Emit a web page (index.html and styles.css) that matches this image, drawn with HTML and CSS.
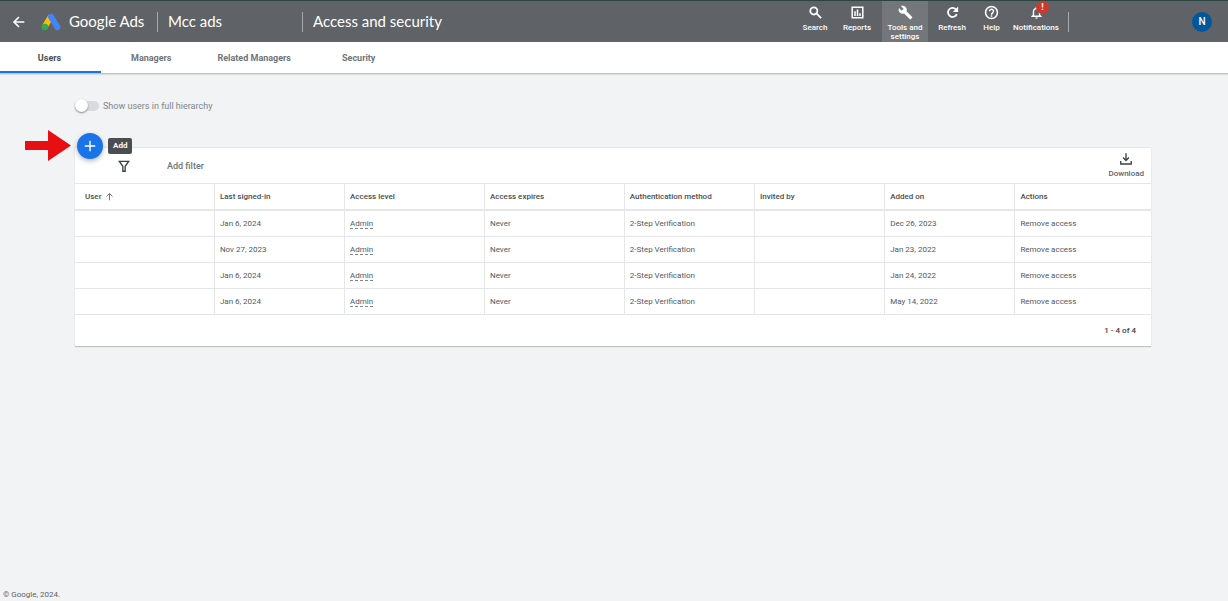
FILE: index.html
```
<!DOCTYPE html>
<html lang="en">
<head>
<meta charset="utf-8">
<meta name="viewport" content="width=device-width, initial-scale=1">
<title>Access and security - Google Ads</title>
<link rel="stylesheet" href="styles.css">
</head>
<body>
<header class="topbar">
  <button class="back" type="button" aria-label="Back">
    <svg viewBox="0 0 24 24" width="16" height="16"><path d="M20 12H5M12 4.5L4.500 12l7.500 7.500" fill="none" stroke="#fff" stroke-width="2.500"/></svg>
  </button>
  <a class="brand" href="#">
    <svg viewBox="0 0 20 18" width="20" height="18" aria-hidden="true">
      <path d="M3.600 14L10 3.400" stroke="#fbbc04" stroke-width="6" fill="none"/>
      <path d="M10.200 4L16.300 14" stroke="#4285f4" stroke-width="6.200" stroke-linecap="round" fill="none"/>
      <circle cx="3.900" cy="14" r="3.300" fill="#34a853"/>
    </svg>
    <span>Google Ads</span>
  </a>
  <span class="account">Mcc ads</span>
  <h1 class="title">Access and security</h1>
  <nav class="tools" aria-label="Tools">
    <button class="tool" type="button">
      <svg viewBox="0 0 24 24"><path fill="none" stroke="#fff" stroke-width="2.800" d="M15 9.500a5.700 5.700 0 1 1-11.400 0a5.700 5.700 0 0 1 11.400 0zM13.500 13.500l7.500 7.500"/></svg>
      <span>Search</span>
    </button>
    <button class="tool" type="button">
      <svg viewBox="0 0 24 24"><path fill="none" stroke="#fff" stroke-width="2.400" d="M3.500 3.500h17v17h-17zM8 10v7.500M12 7v10.500M16 13v4.500"/></svg>
      <span>Reports</span>
    </button>
    <button class="tool tool-active" type="button">
      <svg viewBox="0 0 24 24"><path fill="#fff" d="M22.700 19l-9.100-9.100c.9-2.300.4-5-1.500-6.900-2-2-5-2.400-7.400-1.300L9 6 6 9 1.600 4.700C.4 7.100.9 10.100 2.900 12.100c1.900 1.900 4.600 2.400 6.900 1.500l9.100 9.100c.4.400 1 .4 1.400 0l2.300-2.300c.5-.4.500-1.100.1-1.400z"/></svg>
      <span>Tools and settings</span>
    </button>
    <button class="tool" type="button">
      <svg viewBox="0 0 24 24"><path fill="none" stroke="#fff" stroke-width="2.800" d="M18 7.500A7.300 7.300 0 1 0 18.900 14.500"/><path fill="#fff" d="M21 2.500v8.500h-8.500z"/></svg>
      <span>Refresh</span>
    </button>
    <button class="tool tool-slim" type="button">
      <svg viewBox="0 0 24 24"><circle cx="12" cy="12" r="9.500" fill="none" stroke="#fff" stroke-width="2.500"/><path fill="none" stroke="#fff" stroke-width="2.200" d="M8.800 10a3.200 3.200 0 1 1 5.300 2.400c-1.300 1-2.100 1.500-2.100 3M12 16.500v2.200"/></svg>
      <span>Help</span>
    </button>
    <button class="tool tool-wide" type="button">
      <svg viewBox="0 0 24 24"><path fill="#fff" d="M12 22c1.100 0 2-.9 2-2h-4c0 1.100.9 2 2 2zm6-6v-5c0-3.100-1.600-5.600-4.500-6.300V4a1.500 1.500 0 0 0-3 0v.7C7.600 5.400 6 7.900 6 11v5l-2.500 2v1.200h17V18zm-2.200.8H8.200V11c0-2.500 1.500-4.300 3.800-4.300s3.800 1.800 3.800 4.300z"/></svg>
      <span>Notifications</span>
      <b class="badge">!</b>
    </button>
  </nav>
  <button class="avatar" type="button" aria-label="Account N">N</button>
</header>
<nav class="tabs" aria-label="Sections">
  <a class="tab tab-current" href="#" aria-current="page">Users</a>
  <a class="tab" href="#">Managers</a>
  <a class="tab" href="#">Related Managers</a>
  <a class="tab" href="#">Security</a>
</nav>
<main class="content">
  <label class="hierarchy">
    <input class="switch" type="checkbox" role="switch">
    <span>Show users in full hierarchy</span>
  </label>
  <section class="card">
    <div class="add-group">
      <svg class="pointer" viewBox="0 0 46 31" width="46" height="31" aria-hidden="true"><path fill="#e60f14" d="M0 11h23V0l23 15.500L23 31V20H0z"/></svg>
      <button class="add" type="button" aria-label="Add">
        <svg viewBox="0 0 24 24" width="14" height="14"><path d="M12 3v18M3 12h18" stroke="#fff" stroke-width="2.400"/></svg>
      </button>
      <span class="tip" role="tooltip">Add</span>
    </div>
    <div class="toolbar">
      <button class="filter" type="button">
        <svg viewBox="0 0 24 24" width="14" height="14" aria-hidden="true"><path fill="none" stroke="#3c4043" stroke-width="2.300" d="M4 4h16l-6 8.500V21h-4v-8.500z"/></svg>
        <span>Add filter</span>
      </button>
      <button class="download" type="button">
        <svg viewBox="0 0 24 24" width="14" height="14" aria-hidden="true"><path fill="none" stroke="#3c4043" stroke-width="2.300" d="M12 2v12M7 9.500l5 5 5-5M3 15.500V20.500h18v-5"/></svg>
        <span>Download</span>
      </button>
    </div>
    <table class="users">
      <colgroup><col class="c-l"><col class="c-m"><col class="c-l"><col class="c-l"><col class="c-m"><col class="c-m"><col class="c-m"><col></colgroup>
      <thead>
        <tr>
          <th scope="col" class="first">User <svg viewBox="0 0 24 24" width="9" height="9" aria-hidden="true"><path fill="none" stroke="#5f6368" stroke-width="2.400" d="M12 22V4M4 12l8-8 8 8"/></svg></th>
          <th scope="col">Last signed-in</th><th scope="col">Access level</th><th scope="col">Access expires</th><th scope="col">Authentication method</th><th scope="col">Invited by</th><th scope="col">Added on</th><th scope="col">Actions</th>
        </tr>
      </thead>
      <tbody>
        <tr><td></td><td>Jan 6, 2024</td><td><button class="level" type="button">Admin</button></td><td>Never</td><td>2-Step Verification</td><td></td><td>Dec 26, 2023</td><td><button class="remove" type="button">Remove access</button></td></tr>
        <tr><td></td><td>Nov 27, 2023</td><td><button class="level" type="button">Admin</button></td><td>Never</td><td>2-Step Verification</td><td></td><td>Jan 23, 2022</td><td><button class="remove" type="button">Remove access</button></td></tr>
        <tr><td></td><td>Jan 6, 2024</td><td><button class="level" type="button">Admin</button></td><td>Never</td><td>2-Step Verification</td><td></td><td>Jan 24, 2022</td><td><button class="remove" type="button">Remove access</button></td></tr>
        <tr><td></td><td>Jan 6, 2024</td><td><button class="level" type="button">Admin</button></td><td>Never</td><td>2-Step Verification</td><td></td><td>May 14, 2022</td><td><button class="remove" type="button">Remove access</button></td></tr>
      </tbody>
    </table>
    <div class="pager">1 - 4 of 4</div>
  </section>
</main>
<footer class="legal">© Google, 2024.</footer>
</body>
</html>
```
FILE: styles.css
```
* { box-sizing: border-box; }
body {
  margin: 0;
  min-height: 100vh;
  display: flex;
  flex-direction: column;
  background: #f1f3f4;
  color: #3c4043;
  font: 8px/12px Roboto, "Liberation Sans", sans-serif;
}
button { border: 0; padding: 0; background: none; color: inherit; font: inherit; cursor: pointer; }
a { color: inherit; text-decoration: none; }
svg { display: block; flex: none; }

.topbar {
  display: flex;
  align-items: center;
  height: 42px;
  border-top: 1px solid #2c443f;
  background: #5f6368;
  color: #fff;
}
.back { margin: 0 14px 0 11px; }
.brand { display: flex; align-items: center; gap: 8px; width: 116px; }
.brand, .account, .title { font: 400 15px/19px Lato, Roboto, sans-serif; white-space: nowrap; }
.account, .title { margin: 0; padding: 0 0 1px 10px; border-left: 1px solid #a6a9ac; }
.brand span { padding-bottom: 1px; }
.account { width: 145px; }
.tools { display: flex; align-self: stretch; margin-left: auto; padding-right: 7px; }
.tool {
  position: relative;
  display: flex;
  flex-direction: column;
  align-items: center;
  gap: 3px;
  width: 44px;
  padding-top: 4px;
  font-size: 8px;
  line-height: 9px;
  font-weight: 500;
}
.tool svg { width: 15px; height: 15px; }
.tool-active { width: 46px; background: #73777b; }
.tool:nth-child(1), .tool:nth-child(2) { width: 42px; }
.tool:nth-child(2) { margin-right: 4px; }
.tool:nth-child(4) { width: 48px; }
.tool-slim { width: 31px; }
.tool-wide { width: 58px; }
.badge {
  position: absolute;
  top: 0;
  left: 50%;
  width: 13px;
  height: 13px;
  border-radius: 50%;
  background: #d0372c;
  font-size: 9px;
  line-height: 13px;
  text-align: center;
}
.avatar {
  width: 20px;
  height: 20px;
  margin: 0 16px 0 0;
  border-radius: 50%;
  background: #01579b;
  font-size: 10px;
  line-height: 20px;
  font-weight: 500;
}
.tools::after { content: ""; align-self: center; height: 20px; border-left: 1px solid #a6a9ac; margin: 0 116px 0 3px; }

.tabs {
  display: flex;
  height: 32px;
  border-bottom: 1px solid #bfc1c3;
  background: #fff;
  box-shadow: 0 1px 1px #dcdee0;
  color: #70757a;
  font: 700 9px/32px Roboto, sans-serif;
}
.tab { padding: 0 24px; text-align: center; }
.tab-current { width: 101px; padding-right: 26px; color: #4a4d51; border-bottom: 2px solid #1a73e8; }
.tab:nth-child(2) { padding-left: 30px; }
.tab:nth-child(3) { padding-left: 22px; }
.tab:nth-child(4) { padding-left: 27px; }

.content { flex: 1; padding: 25px 77px 0 75px; }
.hierarchy { display: inline-flex; align-items: center; gap: 4px; height: 14px; color: #80868b; font-size: 9px; }
.switch {
  appearance: none;
  position: relative;
  width: 24px;
  height: 10px;
  margin: 0;
  border-radius: 5px;
  background: #d8dadd;
}
.switch::before {
  content: "";
  position: absolute;
  top: -2px;
  left: 0;
  width: 13px;
  height: 13px;
  border-radius: 50%;
  background: #fff;
  box-shadow: 0 1px 2px #80868b;
}
.switch:checked::before { left: auto; right: 0; background: #1a73e8; }
.card { position: relative; margin-top: 32px; border-top: 1px solid #e4e6e8; background: #fff; box-shadow: 0 1px 1px #bfc2c5; }
.add-group { position: absolute; top: -18px; left: -50px; display: flex; align-items: center; }
.add {
  display: grid;
  place-items: center;
  width: 26px;
  height: 26px;
  margin: 0 5px 0 6px;
  border-radius: 50%;
  background: #1a73e8;
  box-shadow: 0 2px 5px #b4b8bc;
}
.tip { padding: 2px 5px; border-radius: 2px; background: #4a4e52; color: #fff; font-weight: 700; }

.toolbar { display: flex; align-items: center; justify-content: space-between; height: 36px; padding: 0 7px 0 42px; border-bottom: 1px solid #e4e6e8; }
.filter { display: flex; align-items: center; gap: 36px; color: #70757a; font-size: 9px; font-weight: 500; }
.download { display: flex; flex-direction: column; align-items: center; gap: 2px; color: #5f6368; font-weight: 500; }

.users { width: 100%; table-layout: fixed; border-collapse: separate; border-spacing: 0; }
.c-l { width: 13%; }
.c-m { width: 12.1%; }
.users th, .users td { height: 26px; padding: 0 5px; border-bottom: 1px solid #e4e6e8; border-right: 1px solid #e4e6e8; text-align: left; color: #54585c; }
.users th { height: 27px; border-bottom-width: 2px; color: #4a4d51; font-weight: 500; }
.users th:last-child, .users td:last-child { border-right: 0; }
.users .first { padding-left: 10px; }
.first svg { display: inline-block; margin-left: 2px; vertical-align: middle; }
.level { line-height: 9px; border-bottom: 1px dashed #80868b; }
.pager { padding: 10px 15px 9px; text-align: right; font-weight: 500; }
.legal { padding: 0 3px; color: #5f6368; }
```
